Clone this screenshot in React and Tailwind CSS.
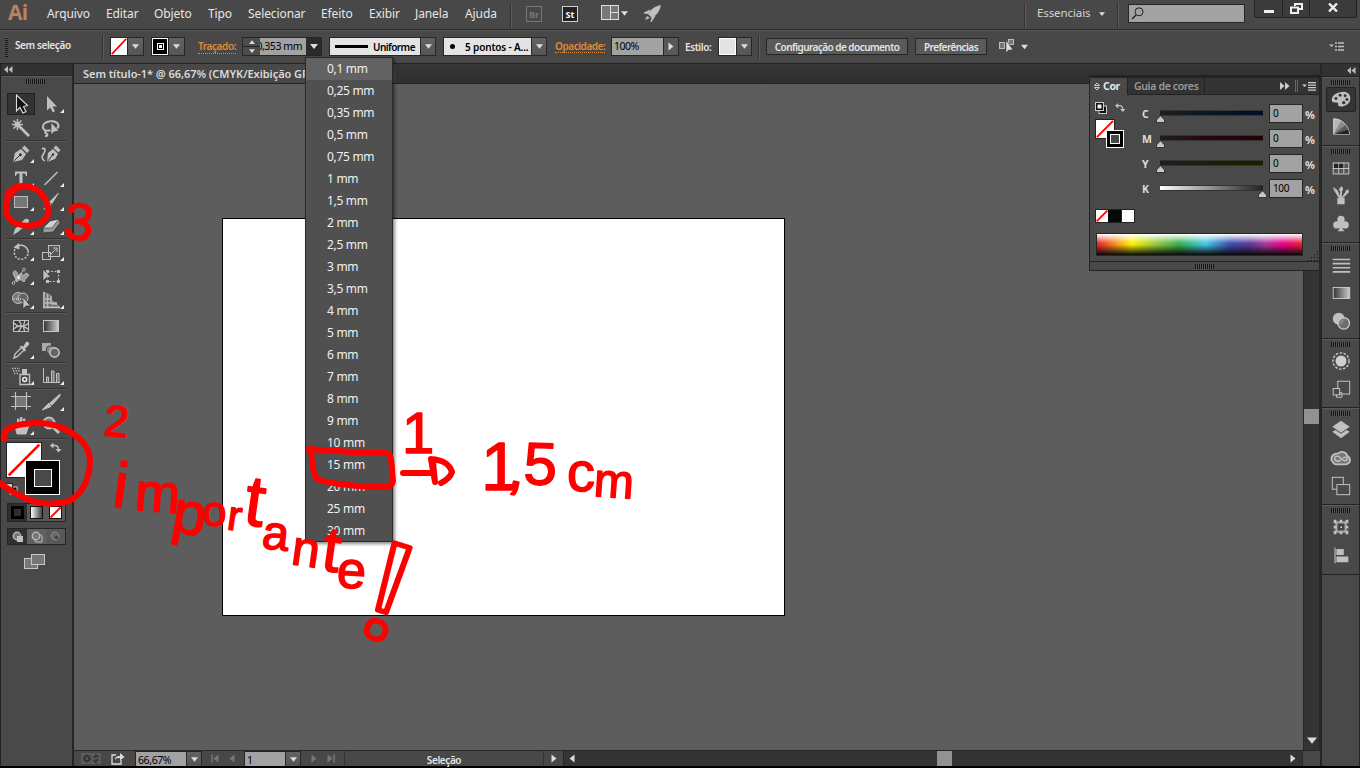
import React from 'react';

const OUT = { stroke: '#252525', strokeWidth: 0.6 };

function Grip() {
  return <div className="h-[5px] w-[19px] bg-[repeating-linear-gradient(90deg,#151515_0_1px,#555_1px_2px)]" />;
}

function Down({ w = 8, h = 5, color = '#dcdcdc' }) {
  return (
    <svg width={w} height={h} viewBox="0 0 8 5" className="shrink-0">
      <path d="M0 0H8L4 5Z" fill={color} />
    </svg>
  );
}

function Side({ flip, color = '#dcdcdc', bar }) {
  return (
    <svg width="9" height="9" viewBox="0 0 9 9" className={flip ? 'shrink-0 -scale-x-100' : 'shrink-0'}>
      <path d="M1.500 0.500L6.500 4.500L1.500 8.500Z" fill={color} />
      {bar && <path d="M8 0.500V8.500" stroke={color} strokeWidth="1.500" />}
    </svg>
  );
}

function Sep({ className = '' }) {
  return <div className={`h-[25px] w-[2px] shrink-0 border-l border-r border-l-[#343434] border-r-[#5c5c5c] ${className}`} />;
}

function Icon({ children, w = 24, h = 24 }) {
  return (
    <svg width={w} height={h} viewBox="0 0 24 24" fill="none" className="shrink-0">
      {children}
    </svg>
  );
}

const F = '#c0c0c0';

const tools = {
  select: <path d="M7.500 3L7.500 19L11 15.500L14 21L17 19.500L14.500 14.500L18.500 13.500Z" fill="#111" stroke="#ddd" strokeWidth="1.100" />,
  direct: <path d="M8 4V18.500L11.300 15.500L13.800 20.500L16 19.300L13.600 14.500H18Z" fill={F} />,
  wand: (
    <g stroke={F}>
      <path d="M9 9L20 20" strokeWidth="2.600" />
      <path d="M8.500 3V14M3 8.500H14M4.500 4.500L12.500 12.500M12.500 4.500L4.500 12.500" strokeWidth="1.500" />
      <circle cx="8.500" cy="8.500" r="2.300" fill={F} />
    </g>
  ),
  lasso: (
    <g>
      <path d="M7 15C3 13 3 9 6 7C10 4 17 5 19 8C21 12 16 15 10 14.500C6 14 5 17 8 18C9 19 8 20.500 6 20" stroke={F} strokeWidth="2" />
      <path d="M12 6V19L15 16L20 15Z" fill={F} {...OUT} />
    </g>
  ),
  pen: (
    <g>
      <path d="M4 20L6 11L12 7L17 12L13 18Z" fill={F} />
      <path d="M13 6L15.500 3.500L20.500 8.500L18 11Z" fill={F} />
      <path d="M4.500 19.500L10.500 13.500" stroke="#333" />
      <circle cx="11.300" cy="12.700" r="1.500" fill="#333" />
    </g>
  ),
  curve: (
    <g>
      <path d="M8 20L9 11L14 7L19 12L16 17Z" fill={F} />
      <path d="M14.500 6L17 3.500L21.500 8L19.500 10.500Z" fill={F} />
      <path d="M8.500 19.500L13.500 13" stroke="#333" />
      <circle cx="14" cy="12.500" r="1.200" fill="#333" />
      <path d="M3 7C6 5 7 8 5 11C2 15 3 18 6 19" stroke={F} strokeWidth="1.600" />
    </g>
  ),
  type: <path d="M6 5.500H18V10H17C16.500 8 16 7.300 13.500 7.300V17C13.500 18 14 18.300 15.500 18.500V19H8.500V18.500C10 18.300 10.500 18 10.500 17V7.300C8 7.300 7.500 8 7 10H6Z" fill={F} />,
  line: <path d="M5.500 19L18.500 6" stroke={F} strokeWidth="1.500" />,
  rect: <rect x="5.500" y="6.500" width="13" height="11" fill="#777" stroke="#bbb" />,
  brush: <path d="M20 3L13 14L10 12L19 3ZM12 14C12 18 8 19 4 20C7 17 6 14 9.500 12.500Z" fill={F} />,
  blob: <path d="M4 21L6 15L14 7C16 4 20 4 20 7C20 9 18 10 17 11L9 18Z" fill={F} />,
  eraser: (
    <g {...OUT}>
      <path d="M11 7L20 5L21 9L14 18L4 19L4 14Z" fill="#999" />
      <path d="M11 7L20 5L13 14H4Z" fill="#d0d0d0" />
    </g>
  ),
  rotate: (
    <g>
      <path d="M8 6.500C14 3 20 8 19 13" stroke={F} strokeWidth="1.500" />
      <path d="M19 14C17 21 7 21 5.500 14C5.200 12 5.500 10 6 9" stroke={F} strokeWidth="1.500" strokeDasharray="2 1.500" />
      <path d="M10 3L4.500 7.500L10.500 9.500Z" fill={F} />
    </g>
  ),
  scale: (
    <g stroke={F}>
      <rect x="9.500" y="5.500" width="11" height="11" fill="#555" />
      <rect x="3.500" y="12.500" width="8" height="7" />
      <path d="M12 14L18 8M14 8H18V12" />
    </g>
  ),
  width: (
    <g stroke={F}>
      <path d="M4 9C6 4 9 9 9 12C11 9 13 9 15 12C16 8 18 9 20 11C18 14 16 14 15 18C12 15 10 15 8 18Z" fill="#999" />
      <path d="M4 19L9 14L15 5" />
      <circle cx="9.500" cy="13.500" r="1.600" fill="#fff" />
      <circle cx="4.500" cy="19" r="1.300" fill="#333" />
      <circle cx="15" cy="5.500" r="1.300" fill="#333" />
    </g>
  ),
  free: (
    <g>
      <rect x="8.500" y="7.500" width="11" height="10" stroke={F} strokeDasharray="2 1.500" />
      <path d="M7 6h3v3h-3zM18 6h3v3h-3zM7 16h3v3h-3zM18 16h3v3h-3z" fill={F} />
      <path d="M4 5V17L7.500 13.500H12Z" fill={F} {...OUT} />
    </g>
  ),
  shape: (
    <g>
      <circle cx="9" cy="10" r="5.500" stroke={F} fill="#777" />
      <circle cx="14" cy="10" r="5" stroke={F} fill="#666" />
      <path d="M5 11H15" stroke="#fff" strokeDasharray="1 1" />
      <path d="M14 9V21L17 18H21.500Z" fill={F} {...OUT} />
    </g>
  ),
  persp: (
    <g stroke={F} strokeWidth="1.500">
      <path d="M5 4V19M8.500 6V19M12 8V15M4 19.500H21M12 16H18M6 11H12M6 15H18" />
      <path d="M4.500 4L12 7.500V12L21 19H4.500Z" fill="#aaa" fillOpacity=".4" strokeWidth=".6" />
    </g>
  ),
  mesh: (
    <g stroke={F}>
      <rect x="4.500" y="6.500" width="15" height="11" fill="#3a3a3a" />
      <path d="M4 8C9 14 14 14 20 9M4 16C9 10 14 11 20 16M10 7C13 10 13 14 9 18M16 7C14 11 14 14 16 18" strokeWidth="1.400" />
    </g>
  ),
  grad: <rect x="4.500" y="6.500" width="15" height="11" fill="url(#hGrad)" stroke="#c5c5c5" />,
  dropper: (
    <g>
      <path d="M5 20L6 16L13 9L15.500 11.500L8.500 18.500Z" stroke={F} strokeWidth="1.400" />
      <path d="M12 7.500L14 9L17 4C19 3 21 5 20 7L16 10.500L17 12.500L15.500 13.500L10.800 8.800Z" fill={F} />
    </g>
  ),
  blend: (
    <g>
      <rect x="3" y="5" width="9" height="8" fill="#aaa" />
      <rect x="7.500" y="8" width="9" height="8" rx="3" fill="#888" stroke="#444" />
      <circle cx="15.500" cy="14.500" r="4.600" fill="#666" stroke={F} strokeWidth="1.600" />
    </g>
  ),
  spray: (
    <g>
      <path d="M11 10.500H20.500V20.500H11Z" fill="#444" stroke={F} strokeWidth="1.400" />
      <path d="M13 5H18V10H13Z" fill={F} />
      <circle cx="15.700" cy="15.500" r="2" stroke="#eee" strokeWidth="1.500" />
      <path d="M3 4.500H11M4 7H11M5 9.500H10" stroke={F} strokeWidth="1.300" strokeDasharray="1.300 1.300" />
    </g>
  ),
  graph: (
    <g stroke={F} fill="#777">
      <path d="M4.500 4V18.500H21" fill="none" />
      <path d="M7.500 18V13H9.500V18M12.500 18V7H15V18M17.500 18V9.500H20V18" />
    </g>
  ),
  artboard: (
    <g stroke={F}>
      <rect x="6.500" y="6.500" width="11" height="10" fill="#777" />
      <path d="M6.500 2V20M17.500 2V20M2 6.500H22M2 16.500H22" strokeWidth="1.200" />
    </g>
  ),
  slice: <path d="M21 4L11 13L13 15L21 6ZM10 13L3 20L12 16.500Z" fill={F} stroke={F} />,
  hand: <path d="M6 12L8 20H17L20 11L18 10L16 13V5H14.500V11H13V3.500H11.500V11H10V5H8.500V14L6.500 10Z" fill={F} stroke={F} />,
  zoom: (
    <g stroke={F}>
      <circle cx="10" cy="9" r="5.500" strokeWidth="2" fill="#777" />
      <path d="M14.500 13.500L20 19" strokeWidth="3" />
    </g>
  ),
};

function Tool({ name, more, active }) {
  return (
    <div className="relative flex h-full w-[30px] items-center justify-center">
      <div className={`flex h-[22px] w-[28px] items-center justify-center ${active ? 'border border-[#222] bg-[#333]' : ''}`}>
        <Icon>{tools[name]}</Icon>
      </div>
      {more && (
        <svg width="4" height="4" viewBox="0 0 4 4" className="absolute right-[2px] bottom-[3px]">
          <path d="M4 0V4H0Z" fill="#eee" />
        </svg>
      )}
    </div>
  );
}

function Row({ a, b, ma = true, mb = true, active }) {
  return (
    <div className="flex h-6 shrink-0">
      <Tool name={a} more={ma} active={active} />
      <Tool name={b} more={mb} />
    </div>
  );
}

function Rule({ className = '' }) {
  return <div className={`h-[2px] w-[60px] shrink-0 border-t border-b border-t-[#343434] border-b-[#585858] ${className}`} />;
}

function NoneBox({ className = '', line = 2.2 }) {
  return (
    <svg viewBox="0 0 20 20" preserveAspectRatio="none" className={`bg-white ${className}`}>
      <path d="M1 19L19 1" stroke="#f00" strokeWidth={line} />
    </svg>
  );
}

function Toolbar() {
  return (
    <aside className="flex w-[74px] shrink-0 flex-col border-r-2 border-l border-r-[#262626] border-l-[#222] bg-[#494949]">
      <div className="flex h-[12px] shrink-0 items-center border-b border-[#262626] bg-[#323232] pl-[3px]">
        <svg width="9" height="7" viewBox="0 0 9 7"><path d="M4 0V7L0 3.500ZM8.500 0V7L4.500 3.500Z" fill="#bbb" /></svg>
      </div>
      <div className="flex h-4 shrink-0 justify-center border-t border-[#5a5a5a] pt-[2px] pr-[2px]"><Grip /></div>
      <div className="flex flex-col pl-[5px]">
        <Row a="select" b="direct" ma={false} active />
        <Row a="wand" b="lasso" ma={false} mb={false} />
        <Rule />
        <Row a="pen" b="curve" mb={false} />
        <Row a="type" b="line" />
        <Row a="rect" b="brush" />
        <Row a="blob" b="eraser" />
        <Rule />
        <Row a="rotate" b="scale" />
        <Row a="width" b="free" mb={false} />
        <Row a="shape" b="persp" />
        <Rule />
        <Row a="mesh" b="grad" ma={false} mb={false} />
        <Row a="dropper" b="blend" mb={false} />
        <Rule />
        <Row a="spray" b="graph" />
        <Rule />
        <Row a="artboard" b="slice" ma={false} />
        <Row a="hand" b="zoom" mb={false} />
        <Rule />
      </div>
      <div className="relative h-[63px] shrink-0">
        <NoneBox line={1.5} className="absolute top-[2px] left-[5px] h-[36px] w-[36px] border border-[#222]" />
        <div className="absolute top-[20px] left-[24px] flex h-[35px] w-[35px] items-center justify-center border border-white bg-black">
          <div className="h-[18px] w-[18px] border border-white bg-[#494949]" />
        </div>
        <svg width="12" height="11" viewBox="0 0 12 11" className="absolute top-[2px] left-[49px]" fill="none">
          <path d="M2 3.500H5C8 3.500 8.500 5 8.500 8" stroke={F} strokeWidth="1.300" />
          <path d="M3.500 0.500V6.500L0 3.500ZM5.500 7H11.500L8.500 10.500Z" fill={F} />
        </svg>
        <svg width="12" height="12" viewBox="0 0 12 12" className="absolute top-[43px] left-[5px]">
          <rect x="4" y="4" width="7" height="7" fill="#111" stroke="#ccc" />
          <rect x="0.500" y="0.500" width="6" height="7" fill="#ccc" stroke="#222" />
        </svg>
      </div>
      <div className="ml-[6px] flex h-[19px] w-[59px] shrink-0 border border-[#252525] bg-[#585858]">
        <div className="flex w-[19px] items-center justify-center bg-[#2e2e2e]"><div className="h-[13px] w-[13px] border-[3px] border-black bg-[#2e2e2e]" /></div>
        <div className="flex w-[19px] items-center justify-center"><div className="h-[13px] w-[13px] border border-[#111] bg-linear-to-r from-white to-[#444]" /></div>
        <div className="flex w-[19px] items-center justify-center"><NoneBox line={3.5} className="h-[13px] w-[13px] border border-[#111]" /></div>
      </div>
      <div className="mt-[6px] ml-[6px] flex h-[17px] w-[59px] shrink-0 border border-[#252525] bg-[#595959]">
        {[0, 1, 2].map((n) => (
          <div key={n} className={`flex w-[19px] items-center justify-center ${n === 0 ? 'bg-[#303030]' : n === 1 ? 'bg-[#606060]' : 'opacity-40'}`}>
            <svg width="12" height="12" viewBox="0 0 12 12">
              <circle cx="5" cy="5" r="3.800" fill="#777" stroke={F} strokeWidth="1.200" />
              {n === 0 && <rect x="5" y="5" width="6" height="6" fill={F} />}
              {n === 1 && <path d="M8.500 3L11 5V11H5L3 8.800" stroke={F} fill="none" />}
              {n === 2 && <path d="M5 5H8V8H5Z" fill="#222" />}
            </svg>
          </div>
        ))}
      </div>
      <svg width="24" height="18" viewBox="0 0 24 18" className="mt-[8px] ml-[22px] shrink-0">
        <rect x="1.500" y="5.500" width="13" height="10" fill="#777" stroke="#c8c8c8" />
        <rect x="8.500" y="1.500" width="13" height="10" fill="#777" stroke="#c8c8c8" />
      </svg>
    </aside>
  );
}

function MenuBar() {
  const items = [
    ['Arquivo', 'w-[59px]'], ['Editar', 'w-[48px]'], ['Objeto', 'w-[54px]'], ['Tipo', 'w-[40px]'], ['Selecionar', 'w-[73px]'],
    ['Efeito', 'w-[48px]'], ['Exibir', 'w-[46px]'], ['Janela', 'w-[50px]'], ['Ajuda', 'w-[46px]'],
  ];
  return (
    <header className="flex h-[30px] shrink-0 border-b border-[#272727] bg-[#484848]">
      <div className="w-[47px] shrink-0 pl-[8px] font-['Open_Sans',sans-serif] text-[21px] leading-[24px] font-bold tracking-[-0.800px] text-[#b98263]">Ai</div>
      <nav className="flex pt-[5px] text-[12px] leading-[18px] tracking-[-0.100px] text-[#e6e6e6]">
        {items.map(([label, w]) => <span key={label} className={`${w} shrink-0 whitespace-nowrap`}>{label}</span>)}
      </nav>
      <Sep className="mt-[3px] -ml-px" />
      <div className="mt-[6px] ml-[14px] flex h-4 w-4 items-center justify-center border border-[#777] text-[9px] leading-none font-bold text-[#777]">Br</div>
      <div className="mt-[6px] ml-5 flex h-4 w-4 items-center justify-center border border-[#d0d0d0] bg-[#222] text-[9px] leading-none font-bold text-white">St</div>
      <svg width="18" height="15" viewBox="0 0 18 15" className="mt-[5px] ml-[23px]" fill="#777" stroke="#ddd">
        <rect x="0.500" y="0.500" width="17" height="14" />
        <path d="M9.500 0V14M9.500 7.500H17" />
      </svg>
      <div className="mt-[11px] ml-[2px]"><Down w={7} /></div>
      <svg width="20" height="19" viewBox="0 0 20 19" className="mt-[4px] ml-[15px]" fill={F}>
        <path d="M18 1C12 2 8 5 5 10L9 14C15 10 17 6 18 1Z" />
        <path d="M7 6L1 9L5 9.500ZM12 12L8 18L9 14Z" stroke={F} />
        <path d="M4 12L2 16L7 14Z" />
      </svg>
      <Sep className="mt-[3px] ml-[361px]" />
      <span className="mt-[4px] ml-[11px] w-[62px] text-[11.500px] leading-[18px] tracking-[-0.100px] text-[#d4d4d4]">Essenciais</span>
      <div className="mt-[12px]"><Down w={6} h={4} /></div>
      <Sep className="mt-[3px] ml-[12px]" />
      <div className="mt-[4px] ml-[9px] flex h-[19px] w-[117px] items-center border border-[#252525] bg-[#a2a2a2] pl-[2px]">
        <svg width="13" height="13" viewBox="0 0 13 13" fill="none" stroke="#222">
          <circle cx="8" cy="4.800" r="4" />
          <path d="M5 8L1 12" strokeWidth="1.500" />
        </svg>
      </div>
      <div className="ml-[9px] flex h-[18px] w-[103px] rounded-b-[3px] border border-t-0 border-[#222] bg-[#3b3b3b]">
        <div className="flex w-[28px] justify-center border-r border-[#222] pt-[10px]"><div className="h-[3px] w-[10px] bg-[#eee]" /></div>
        <div className="flex w-[27px] justify-center border-r border-[#222] pt-[3px]">
          <svg width="13" height="11" viewBox="0 0 13 11" fill="none" stroke="#eee" strokeWidth="2">
            <path d="M5 3V1H12V6H9M1 4.500H8V10H1Z" />
          </svg>
        </div>
        <div className="flex flex-1 justify-center pt-[3px]">
          <svg width="10" height="9" viewBox="0 0 10 9" stroke="#eee" strokeWidth="2.400"><path d="M1 0.500L9 8.500M9 0.500L1 8.500" /></svg>
        </div>
      </div>
    </header>
  );
}

function DD({ className = '' }) {
  return (
    <div className={`flex h-full w-[15px] shrink-0 items-center justify-center border-l border-[#2a2a2a] bg-linear-to-b from-[#636363] to-[#555] ${className}`}>
      <Down w={7} h={5} />
    </div>
  );
}

function OptionsBar() {
  return (
    <div className="flex h-[34px] shrink-0 items-start border-t border-b border-t-[#5a5a5a] border-b-[#242424] bg-[#484848] pt-[6px] text-[10px] leading-[19px] font-semibold tracking-[-0.550px] whitespace-nowrap text-[#e4e4e4]">
      <div className="ml-[5px] h-5 w-[3px] shrink-0 bg-[repeating-linear-gradient(0deg,#151515_0_1px,#555_1px_2px)]" />
      <span className="-mt-px ml-[7px] w-[87px] shrink-0 tracking-[-0.400px]">Sem seleção</span>
      <Sep className="-mt-[3px]" />
      <div className="ml-[6px] flex h-[19px] w-[34px] shrink-0 border border-[#262626]">
        <NoneBox className="h-full w-[18px]" /><DD className="w-[16px]" />
      </div>
      <div className="ml-[7px] flex h-[19px] w-[34px] shrink-0 border border-[#262626]">
        <div className="flex w-[18px] items-center justify-center border border-white bg-black">
          <div className="flex h-[7px] w-[7px] items-center justify-center border border-white bg-black"><div className="h-[3px] w-[3px] bg-white" /></div>
        </div>
        <DD className="w-[16px]" />
      </div>
      <span className="mt-px ml-[13px] h-[16px] w-[38px] shrink-0 border-b border-dotted border-[#e08a35] leading-[17px] tracking-[-0.400px] text-[#e08a35]">Traçado:</span>
      <div className="ml-[6px] flex h-[19px] w-[80px] shrink-0 border border-[#262626] bg-[#a2a2a2] text-black">
        <div className="flex w-[17px] flex-col bg-[#4c4c4c]">
          <div className="flex h-1/2 items-center justify-center border-b border-[#262626]"><div className="rotate-180"><Down w={6} h={4} /></div></div>
          <div className="flex h-1/2 items-center justify-center"><Down w={6} h={4} /></div>
        </div>
        <div className="flex w-[46px] justify-end overflow-hidden pr-[4px] text-[10.500px] leading-[17px] font-normal tracking-[-0.450px]">0,353 mm</div>
        <div className="flex w-[15px] items-center justify-center bg-[#2b2b2b]"><Down /></div>
      </div>
      <div className="ml-[7px] flex h-[19px] w-[107px] shrink-0 border border-[#262626] bg-[#e4e4e4] text-black">
        <div className="flex w-[91px] items-center pl-[5px]">
          <div className="h-[3px] w-[33px] bg-black" />
          <span className="ml-[5px] leading-[18px]">Uniforme</span>
        </div>
        <DD />
      </div>
      <div className="ml-[7px] flex h-[19px] w-[104px] shrink-0 border border-[#262626] bg-[#e4e4e4] text-black">
        <div className="flex w-[88px] items-center pl-[6px]">
          <div className="h-[5px] w-[5px] rounded-full bg-black" />
          <span className="ml-[10px] leading-[18px] tracking-[-0.150px]">5 pontos - A...</span>
        </div>
        <DD />
      </div>
      <span className="ml-[8px] h-[16px] w-[50px] shrink-0 border-b border-dotted border-[#e08a35] leading-[18px] tracking-[-0.450px] text-[#e08a35]">Opacidade:</span>
      <div className="ml-[6px] flex h-[19px] w-[68px] shrink-0 border border-[#262626] bg-[#a2a2a2] text-black">
        <span className="w-[52px] pl-[2px] text-[10.500px] leading-[17px] font-normal tracking-[-0.500px]">100%</span>
        <div className="flex w-[15px] items-center justify-center border-l border-[#262626] bg-[#585858]"><Side /></div>
      </div>
      <span className="mt-px ml-[6px] w-[33px] shrink-0 tracking-[-0.400px]">Estilo:</span>
      <div className="flex h-[19px] w-[34px] shrink-0 border border-[#262626]">
        <div className="w-[17px] border border-[#fff] bg-[#e4e4e4]" /><DD />
      </div>
      <Sep className="-mt-[3px] ml-[6px]" />
      <div className="mt-px ml-[6px] h-[17px] w-[142px] shrink-0 border border-[#262626] bg-[#5a5a5a] text-center leading-[17px]">Configuração de documento</div>
      <div className="mt-px ml-[7px] h-[17px] w-[72px] shrink-0 border border-[#262626] bg-[#5a5a5a] text-center leading-[17px]">Preferências</div>
      <svg width="17" height="15" viewBox="0 0 17 15" className="mt-[1px] ml-[11px] shrink-0" fill="#777" stroke="#bbb">
        <rect x="1.500" y="4.500" width="5" height="6" /><rect x="10.500" y="1.500" width="5" height="5" />
        <path d="M8 2V15L10.500 12H15Z" fill="#ddd" stroke="#333" strokeWidth=".5" />
      </svg>
      <div className="mt-[7px] ml-[6px]"><Down w={7} h={6} /></div>
      <svg width="15" height="9" viewBox="0 0 15 9" className="mt-[5px] ml-[301px] shrink-0">
        <path d="M0 2.500H5L2.500 5Z" fill={F} />
        <path d="M6 1H8M6 4.500H8M6 8H8M9 1H15M9 4.500H15M9 8H15" stroke={F} strokeWidth="1.500" />
      </svg>
    </div>
  );
}

function StatusBar() {
  return (
    <div className="flex h-[16px] shrink-0 items-center border-t border-[#272727] bg-[#484848]">
      <svg width="20" height="11" viewBox="0 0 20 11" className="ml-[7px]">
        <rect width="20" height="11" rx="1" fill="#5c5c5c" />
        <circle cx="6" cy="5.500" r="2.600" fill="none" stroke="#353535" strokeWidth="2" />
        <path d="M6 1V10M1.500 5.500H10.500M3 2.500L9 8.500M9 2.500L3 8.500" stroke="#353535" />
        <circle cx="6" cy="5.500" r="1.400" fill="#5c5c5c" />
        <path d="M12 4H15V2L18 4.500M18 7H15V9.500L12 7" fill="none" stroke="#353535" strokeWidth="1.500" />
      </svg>
      <svg width="14" height="13" viewBox="0 0 14 13" className="ml-[10px]" fill="none" stroke="#ddd" strokeWidth="1.300">
        <path d="M5 3H1V12H10V8" />
        <path d="M4 8C4 5 6 4 9 4V1L13.500 5L9 8.500V6C7 6 5 6 4 8Z" fill="#ddd" stroke="none" />
      </svg>
      <div className="ml-[10px] flex h-[15px] w-[67px] border border-b-0 border-[#262626] bg-[#a2a2a2] text-[10.500px] leading-[17px] tracking-[-0.400px] text-black">
        <span className="w-[51px] pl-[2px]">66,67%</span><DD className="w-[14px]" />
      </div>
      <div className="ml-[9px]"><Side flip bar color="#777" /></div>
      <div className="ml-[7px]"><Side flip color="#777" /></div>
      <div className="ml-[8px] flex h-[15px] w-[57px] border border-b-0 border-[#262626] bg-[#a2a2a2] text-[10.500px] leading-[17px] text-black">
        <span className="w-[41px] pl-[2px]">1</span><DD className="w-[14px]" />
      </div>
      <div className="ml-[9px]"><Side color="#777" /></div>
      <div className="ml-[7px]"><Side bar color="#777" /></div>
      <div className="ml-[9px] h-full w-[200px] border-r border-l border-[#333] text-center text-[10px] leading-[18px] font-semibold tracking-[-0.400px] text-[#e4e4e4]">Seleção</div>
      <div className="ml-[6px]"><Side /></div>
      <div className="ml-[4px] flex h-full flex-1 items-center border-l border-[#262626] bg-[#343434]">
        <div className="ml-[3px]"><Side flip /></div>
        <div className="ml-[361px] h-full w-[15px] bg-[#929292]" />
        <div className="mr-[4px] ml-auto"><Side /></div>
      </div>
      <div className="h-full w-[18px] border-l border-[#2a2a2a]" />
    </div>
  );
}

function Doc() {
  return (
    <main className="flex min-w-0 flex-1 flex-col">
      <div className="flex h-[20px] shrink-0 border-b border-[#242424] bg-linear-to-b from-[#363636] to-[#2e2e2e]">
        <div className="w-[322px] bg-[#484848] pl-[9px] text-[11px] leading-[20px] font-semibold tracking-[-0.050px] whitespace-nowrap text-[#dadada]">Sem título-1* @ 66,67% (CMYK/Exibição GPU)</div>
      </div>
      <div className="flex min-h-0 flex-1">
        <div className="flex-1 bg-[#5d5d5d] pt-[134px] pl-[148px]">
          <div className="h-[398px] w-[563px] border border-black bg-white" />
        </div>
        <div className="flex w-[17px] flex-col items-center border-r border-l border-[#272727] bg-[#343434]">
          <div className="mt-[325px] h-[15px] w-full bg-[#929292]" />
          <div className="mt-auto mb-[6px]"><Down w={10} h={7} /></div>
        </div>
      </div>
      <StatusBar />
    </main>
  );
}

const dockIcons = {
  palette: <g><path d="M2 14C1 8 8 4 15 4C20 4 23 8 22 13C21 18 15 21 10 20C8 19 10 17 8 16C6 15 3 17 2 14Z" fill={F} /><g fill="#333"><circle cx="6.500" cy="11.500" r="1.600" /><circle cx="11" cy="8" r="1.600" /><circle cx="16.500" cy="8.500" r="1.600" /><circle cx="18.500" cy="12.500" r="1.600" /><circle cx="15" cy="16" r="1.800" /></g></g>,
  guide: <g><path d="M4 3V20H21C21 11 13 3 4 3Z" fill="#b5b5b5" stroke="#ddd" /><path d="M4 20L12 5.500L17 9.500Z" fill="#8a8a8a" /><path d="M4 20L17 9.500L20 14.500Z" fill="#5c5c5c" /><path d="M4 20L20 14.500L21 20Z" fill="#222" /></g>,
  swatches: <g><rect x="3.500" y="6.500" width="17" height="12" fill="#555" stroke="#ccc" /><path d="M3 12.500H21M9.500 6V18M15 6V18" stroke="#ccc" /><path d="M4.500 7.500H9V12H4.500ZM10 7.500H14.500V12H10Z" fill="#222" /></g>,
  brushes: <g fill={F}><path d="M8 14H16V21H8Z" /><path d="M10 14L5 6L4 3L8 6L11 14ZM11.500 14V7C9 5 12 2 13 2C14 4 14 6 12.500 7V14ZM13 14L17 8C18 4 21 5 20 8L14 14Z" stroke={F} /></g>,
  club: <g fill={F}><circle cx="12" cy="7" r="4" /><circle cx="7.500" cy="13" r="4" /><circle cx="16.500" cy="13" r="4" /><path d="M11 10H13L14 18L16 20H8L10 18Z" /></g>,
  lines: <path d="M3 6H22M3 10.500H22M3 15H22M3 19.500H22" stroke={F} strokeWidth="1.800" />,
  gradient: <rect x="3.500" y="6" width="18" height="12" fill="url(#hGrad)" stroke="#ccc" />,
  transp: <g><circle cx="9.500" cy="9.500" r="6.500" fill={F} /><circle cx="15" cy="14.500" r="6.300" fill="#777" fillOpacity=".8" stroke="#ccc" strokeWidth="1.400" /></g>,
  appear: <g><circle cx="12" cy="12" r="6" fill="#d0d0d0" /><circle cx="12" cy="12" r="8.800" stroke="#ccc" strokeWidth="1.500" strokeDasharray="2.800 1.600" /></g>,
  styles: <g stroke="#ccc"><rect x="8.500" y="3.500" width="13" height="14" /><rect x="3.500" y="11.500" width="7" height="7" fill="#494949" /><path d="M10 16H13V21H7V18" /></g>,
  layers: <g fill={F}><path d="M12 2L21.500 8.500L12 15L2.500 8.500Z" /><path d="M2.500 14L6 12L12 16.200L18 12L21.500 14L12 21Z" /></g>,
  cc: <g stroke={F} strokeWidth="2"><path d="M7 19H17C23 18 23 12 19 10C18 5 12 4 9 7C4 7 1 10 1.500 14C3 17 5 19 7 19Z" fill="#777" /><path d="M12 14L9.500 15.500C4 16 4 10 8 10C11 10 13 15 17 15C20 14 19 11 16 11L14 12" strokeWidth="1.500" /></g>,
  boards: <g stroke="#ccc"><rect x="2.500" y="2.500" width="12" height="13" /><rect x="7.500" y="10.500" width="14" height="11" fill="#494949" /></g>,
  transform: <g><rect x="6.500" y="6.500" width="11" height="11" stroke={F} /><path d="M4 4h3v4h-3zM10.500 4h3v3h-3zM17 4h3v4h-3zM4 10.500h3v3h-3zM17 10.500h3v3h-3zM4 16h3v4h-3zM10.500 17h3v3h-3zM17 16h3v4h-3z" fill={F} /><path d="M7.500 7.500H16.500V16.500H7.500Z" fill="#444" stroke="#ccc" /><path d="M11.500 11.500H13V13H11.500Z" fill="#eee" /></g>,
  align: <g><path d="M5.500 4V21" stroke="#ddd" /><path d="M7 5.500H15V12H7ZM7 13.500H20V20H7Z" fill={F} /></g>,
};

function Dock() {
  const groups = [
    ['h-[69px]', ['palette', 'guide']],
    ['h-[97px]', ['swatches', 'brushes', 'club']],
    ['h-[96px]', ['lines', 'gradient', 'transp']],
    ['h-[69px]', ['appear', 'styles']],
    ['h-[97px]', ['layers', 'cc', 'boards']],
    ['h-[70px]', ['transform', 'align']],
  ];
  return (
    <aside className="flex w-[40px] shrink-0 flex-col border-r border-l-2 border-[#262626] bg-[#494949]">
      <div className="flex h-[12px] shrink-0 items-center justify-end bg-[#323232] pr-[3px]">
        <svg width="9" height="7" viewBox="0 0 9 7"><path d="M4 0V7L0 3.500ZM8.500 0V7L4.500 3.500Z" fill="#bbb" /></svg>
      </div>
      {groups.map(([h, icons]) => (
        <div key={icons[0]} className={`flex ${h} shrink-0 flex-col items-center border-t border-[#222]`}>
          <div className="flex h-[8px] w-full shrink-0 justify-center border-t border-[#5c5c5c] pt-[2px]"><Grip /></div>
          {icons.map((n) => (
            <div key={n} className="flex h-[28px] shrink-0 items-center justify-center">
              <div className={`flex h-[25px] w-[30px] items-center justify-center ${n === 'palette' ? 'rounded-[2px] border border-[#222] bg-[#343434]' : ''}`}>
                <Icon w={22} h={22}>{dockIcons[n]}</Icon>
              </div>
            </div>
          ))}
        </div>
      ))}
      <div className="h-px shrink-0 bg-[#222]" />
    </aside>
  );
}

function ColorPanel() {
  const rows = [
    ['C', '0', 'bg-linear-to-r from-[#1e1e1e] via-[#061820] to-[#040d28]'],
    ['M', '0', 'bg-linear-to-r from-[#1e1e1e] via-[#25040e] to-[#230404]'],
    ['Y', '0', 'bg-linear-to-r from-[#1e1e1e] via-[#201d05] to-[#1e1c00]'],
    ['K', '100', 'bg-linear-to-r from-white via-[#909090] to-[#222]'],
  ];
  return (
    <section className="absolute top-[75px] left-[1089px] flex h-[196px] w-[231px] flex-col border border-t-[3px] border-[#232323] bg-[#494949]">
      <div className="flex h-[17px] shrink-0 items-center border-b border-[#232323] bg-[#333] text-[10.500px] font-semibold tracking-[-0.350px]">
        <div className="flex h-[17px] w-[38px] items-center gap-[3px] self-start border-r border-[#232323] bg-[#494949] pl-[4px] font-bold text-[#e6e6e6]">
          <svg width="6" height="9" viewBox="0 0 6 9" fill="none" stroke="#ccc"><path d="M.5 3.500L3 1L5.500 3.500ZM.5 5.500L3 8L5.500 5.500Z" /></svg>
          Cor
        </div>
        <div className="h-full w-[77px] border-r border-[#232323] pl-[6px] leading-[17px] whitespace-nowrap text-[#9a9a9a]">Guia de cores</div>
        <svg width="10" height="8" viewBox="0 0 10 8" className="ml-[75px]"><path d="M0 0L4.500 4L0 8ZM5 0L9.500 4L5 8Z" fill="#ccc" /></svg>
        <div className="ml-[5px] h-3 w-[3px] border-r border-l border-[#666]" />
        <svg width="14" height="9" viewBox="0 0 14 9" className="ml-[4px]"><path d="M0 2.500H5L2.500 5ZM6 0H14V1.200H6ZM6 2.500H14V3.700H6ZM6 5H14V6.200H6ZM6 7.500H14V8.700H6Z" fill="#ccc" /></svg>
      </div>
      <div className="flex h-[105px] shrink-0">
        <div className="relative w-[48px] shrink-0">
          <svg width="12" height="12" viewBox="0 0 12 12" className="absolute top-[7px] left-[5px]"><rect x="4" y="4" width="7.500" height="7.500" fill="#111" stroke="#ccc" /><rect x="0.500" y="0.500" width="8" height="8" fill="#111" stroke="#ccc" /><rect x="2.500" y="2.500" width="4" height="4" fill="#eee" /></svg>
          <svg width="11" height="11" viewBox="0 0 12 11" className="absolute top-[7px] left-[25px]" fill="none"><path d="M2 3.500H5C8 3.500 8.500 5 8.500 8" stroke={F} strokeWidth="1.300" /><path d="M3.500 0.500V6.500L0 3.500ZM5.500 7H11.500L8.500 10.500Z" fill={F} /></svg>
          <NoneBox className="absolute top-[24px] left-[5px] h-[20px] w-[20px] border border-[#222]" />
          <div className="absolute top-[35px] left-[16px] flex h-[18px] w-[18px] items-center justify-center border border-white bg-black"><div className="h-[10px] w-[10px] border border-white bg-[#494949]" /></div>
        </div>
        <div className="flex flex-1 flex-col pt-[9px]">
          {rows.map(([k, v, bg]) => (
            <div key={k} className="flex h-[25px] shrink-0 items-start text-[11px] leading-[20px] font-bold text-[#dcdcdc]">
              <span className="w-[22px] pl-[4px] text-[10.500px] leading-[21px]">{k}</span>
              <div className="relative mt-[6px] h-[6px] w-[103px] shrink-0 border-t border-b border-[#333]">
                <div className={`h-full w-full ${bg}`} />
                <svg width="9" height="8" viewBox="0 0 9 8" className={`absolute top-[4px] ${v === '100' ? 'left-[98px]' : '-left-[4px]'}`}><path d="M.5 7.500V5L4.500 .7L8.500 5V7.500Z" fill="#c8c8c8" stroke="#222" strokeWidth=".8" /></svg>
              </div>
              <div className="ml-[6px] h-[19px] w-[34px] shrink-0 border border-[#262626] bg-[#a2a2a2] pl-[3px] text-[10px] leading-[17px] font-normal tracking-[-0.400px] text-black">{v}</div>
              <span className="ml-[2px] text-[11px] leading-[21px] font-bold">%</span>
            </div>
          ))}
        </div>
      </div>
      <div className="mt-[9px] ml-[5px] flex h-[14px] w-[40px] shrink-0 border border-[#222] bg-[#222]">
        <NoneBox line={3} className="h-3 w-3" /><div className="h-3 w-[13px] bg-[#030808]" /><div className="h-3 w-[13px] border-l border-[#222] bg-white" />
      </div>
      <div className="mt-[10px] ml-[6px] flex shrink-0 items-end">
        <div className="h-[23px] w-[207px] border border-[#262626] bg-[linear-gradient(180deg,#fff_0%,rgba(255,255,255,0)_45%,rgba(10,10,10,0)_50%,#080808_100%),linear-gradient(90deg,#e8202a_0%,#f7901e_9%,#fff200_17%,#8cc63f_30%,#39b04a_40%,#43c6e8_53%,#3a4fae_65%,#5a3a9c_74%,#a83a9a_82%,#ec008c_91%,#e8202a_100%)]" />
        <svg width="10" height="10" viewBox="0 0 10 10" className="-mb-[5px] ml-[5px]" stroke="#151515" fill="none">
          <path d="M0 9.500H10M3 6.500H10M6 3.500H10M9 .5H10" strokeDasharray="1 2" />
        </svg>
      </div>
      <div className="mt-auto flex h-[9px] shrink-0 justify-center border-t border-[#232323] pt-[2px]"><Grip /></div>
    </section>
  );
}

const sizes = ['0,1', '0,25', '0,35', '0,5', '0,75', '1', '1,5', '2', '2,5', '3', '3,5', '4', '5', '6', '7', '8', '9', '10', '15', '20', '25', '30'];

function SizeMenu() {
  return (
    <div className="absolute top-[57px] left-[305px] flex h-[485px] w-[88px] flex-col border border-[#2a2a2a] bg-[#505050] text-[12px] leading-[22px] tracking-[-0.300px] text-[#f0f0f0] shadow-[2px_2px_3px_rgba(0,0,0,0.45)]">
      {sizes.map((s, i) => (
        <div key={s} className={`h-[22px] shrink-0 pl-[21px] ${i === 0 ? 'bg-[#626262]' : ''}`}>{s} mm</div>
      ))}
    </div>
  );
}

const word = [
  ['i', 111, 506, 64, 8], ['m', 134, 510, 54, 4], ['p', 170, 531, 60, 10], ['o', 203, 526, 42, 0], ['r', 226, 529, 42, 8],
  ['t', 242, 524, 72, 8], ['a', 261, 548, 48, 6], ['n', 290, 564, 50, 8], ['t', 320, 570, 64, 8], ['e', 336, 587, 52, 4],
];
const measure = [['1', 481, 490, 68, 0], [',', 507, 486, 58, 12], ['5', 523, 484, 60, 2], ['c', 567, 491, 56, 0], ['m', 593, 496, 48, 4]];

function Ink({ glyphs }) {
  return (
    <text fill="#f00" stroke="#f00" strokeWidth="1.500" strokeLinejoin="round">
      {glyphs.map(([c, x, y, size, r], i) => (
        <tspan key={i} x={x} y={y} fontSize={size} rotate={r}>{c}</tspan>
      ))}
    </text>
  );
}

function Notes() {
  return (
    <svg width="1360" height="768" viewBox="0 0 1360 768" className="pointer-events-none absolute top-0 left-0 font-['Liberation_Sans',sans-serif]">
      <g fill="none" stroke="#f00" strokeWidth="6" strokeLinecap="round" strokeLinejoin="round">
        <path d="M7 195C13 184 27 184 37 190C47 197 50 209 47 217C39 229 17 228 9 218C3 209 6 197 15 190C19 186 22 185 24 187" />
        <path d="M4 439C1 428 17 423 40 423C62 424 84 437 89 453C93 475 82 495 69 501C52 506 33 504 19 495C10 491 4 486 0 483" />
        <path d="M309 449C334 451 362 453 387 453C393 455 391 468 393 480C393 487 387 487 375 487C354 486 330 484 317 479C311 472 314 460 310 450" />
        <path d="M403 473H431M431 459L435 482L433 462M431 459C442 460 449 463 452 472C450 478 445 481 441 483" />
      </g>
      <Ink glyphs={[['1', 402, 453, 58, 0]]} />
      <Ink glyphs={[['2', 103, 435, 44, 6]]} />
      <Ink glyphs={[['3', 63, 238, 52, 6]]} />
      <Ink glyphs={word} />
      <Ink glyphs={measure} />
      <text x="0" y="0" transform="translate(355 631) rotate(17) scale(1.200 1.080)" fontSize="124" fill="none" stroke="#f00" strokeWidth="5" strokeLinejoin="round" className="font-['Noto_Sans',sans-serif]">!</text>
    </svg>
  );
}

export default function App() {
  return (
    <div className="relative flex h-[768px] w-[1360px] flex-col overflow-hidden bg-black pb-[2px] font-['Noto_Sans',sans-serif]">
      <svg width="0" height="0" className="absolute">
        <linearGradient id="hGrad"><stop stopColor="#333" /><stop offset="1" stopColor="#ccc" /></linearGradient>
      </svg>
      <MenuBar />
      <OptionsBar />
      <div className="flex min-h-0 flex-1">
        <Toolbar />
        <Doc />
        <Dock />
      </div>
      <ColorPanel />
      <SizeMenu />
      <Notes />
    </div>
  );
}
